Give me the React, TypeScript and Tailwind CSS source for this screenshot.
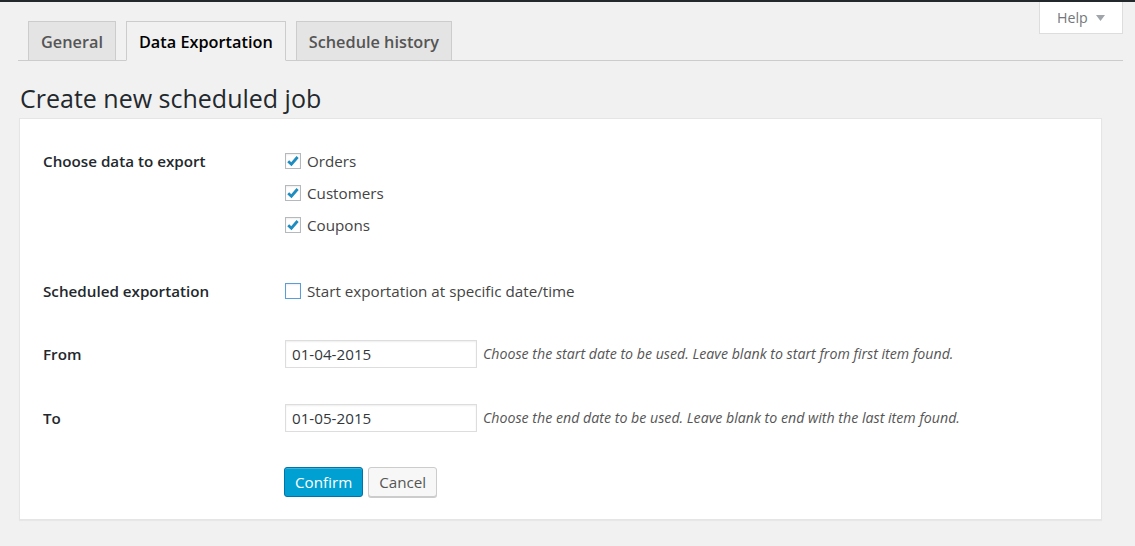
import React from "react";

const tabs = [
  { label: "General", active: false },
  { label: "Data Exportation", active: true },
  { label: "Schedule history", active: false },
];

function CheckBox({ checked, focused }: { checked?: boolean; focused?: boolean }) {
  return (
    <span
      className={`flex h-4 w-4 shrink-0 items-center justify-center border bg-white shadow-[inset_0_1px_2px_rgba(0,0,0,0.07)] ${
        focused ? "border-[#5b9dd9]" : "border-[#b4b9be]"
      }`}
    >
      {checked && (
        <svg width="14" height="14" viewBox="0 0 14 14">
          <path d="M2.2 7.2 L5.4 10.2 L11.6 3" fill="none" stroke="#1e8cbe" strokeWidth="2.8" />
        </svg>
      )}
    </span>
  );
}

function DateField({ value, hint }: { value: string; hint: string }) {
  return (
    <div className="flex items-center">
      <div className="flex h-7 w-[192px] items-center border border-[#ddd] bg-white px-[6px] text-[15.2px] text-[#32373c] shadow-[inset_0_1px_2px_rgba(0,0,0,0.07)]">
        {value}
      </div>
      <span className="ml-[6px] text-[14.2px] italic text-[#555]">{hint}</span>
    </div>
  );
}

export default function App() {
  return (
    <div className="relative min-h-[546px] bg-[#f1f1f1] font-['Open_Sans',sans-serif]">
      <div className="h-[2px] bg-[#23282d]" />

      {/* Help tab */}
      <div className="absolute right-[12px] top-[2px] flex h-[32px] w-[84px] items-center border border-t-0 border-[#ddd] bg-white pl-[17px] text-[14.2px] text-[#72777c]">
        <span>Help</span>
        <svg className="ml-[8px]" width="9" height="6" viewBox="0 0 9 6">
          <path d="M0 0 H9 L4.5 6 Z" fill="#a0a5aa" />
        </svg>
      </div>

      <div className="pl-[18px] pr-[12px]">
        <div className="mt-[19px] flex border-b border-[#ccc] pl-[10px]">
          {tabs.map((t, i) => (
            <div
              key={t.label}
              className={`-mb-px border border-[#ccc] px-[12px] pb-[6px] pt-[8px] text-[16.3px] font-semibold leading-6 ${
                i > 0 ? "ml-[10px]" : ""
              } ${
                t.active
                  ? "border-b-[#f1f1f1] bg-[#f1f1f1] text-black"
                  : "bg-[#e4e4e4] text-[#555]"
              }`}
            >
              {t.label}
            </div>
          ))}
        </div>
      </div>

      <h1 className="ml-[20px] mt-[23px] text-[25px] font-normal leading-[28px] text-[#23282d]">
        Create new scheduled job
      </h1>

      <div className="ml-[19px] mt-[6px] w-[1083px] border border-[#e5e5e5] bg-white px-[23px] pb-[22px] pt-[26px] text-[#23282d] shadow-[0_1px_1px_rgba(0,0,0,0.04)]">
        <div className="grid grid-cols-[242px_1fr]">
          <div className="flex h-8 items-center pt-px text-[15.2px] font-semibold">Choose data to export</div>
          <div className="flex flex-col text-[15.2px] text-[#444]">
            {["Orders", "Customers", "Coupons"].map((l) => (
              <div key={l} className="flex h-8 items-center gap-[6px]">
                <CheckBox checked />
                <span>{l}</span>
              </div>
            ))}
          </div>
        </div>

        <div className="mt-[34px] grid grid-cols-[242px_1fr]">
          <div className="flex h-8 items-center text-[15.2px] font-semibold">Scheduled exportation</div>
          <div className="flex h-8 items-center gap-[6px] text-[15.2px] text-[#444]">
            <CheckBox focused />
            <span>Start exportation at specific date/time</span>
          </div>
        </div>

        <div className="mt-[33px] grid grid-cols-[242px_1fr] items-center">
          <div className="pt-px text-[15.2px] font-semibold">From</div>
          <DateField value="01-04-2015" hint="Choose the start date to be used. Leave blank to start from first item found." />
        </div>

        <div className="mt-[36px] grid grid-cols-[242px_1fr] items-center">
          <div className="pt-px text-[15.2px] font-semibold">To</div>
          <DateField value="01-05-2015" hint="Choose the end date to be used. Leave blank to end with the last item found." />
        </div>

        <div className="mt-[35px] grid grid-cols-[241px_1fr]">
          <div />
          <div className="flex gap-[5px]">
            <button className="h-[30px] rounded-[3px] border border-[#0073aa] bg-[#00a0d2] px-[10px] text-[15.2px] text-white shadow-[inset_0_1px_0_rgba(120,200,230,0.5)]">
              Confirm
            </button>
            <button className="h-[30px] rounded-[3px] border border-[#ccc] bg-[#f7f7f7] px-[10px] text-[15.2px] text-[#555] shadow-[0_1px_0_#ccc]">
              Cancel
            </button>
          </div>
        </div>
      </div>
    </div>
  );
}
